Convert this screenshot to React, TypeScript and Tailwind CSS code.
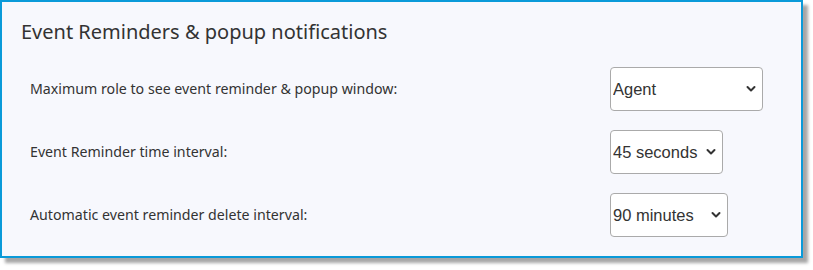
const settings = [
  {
    label: "Maximum role to see event reminder & popup window:",
    value: "Agent",
    options: ["Agent", "Supervisor", "Administrator"],
    width: "w-[153px]",
  },
  {
    label: "Event Reminder time interval:",
    value: "45 seconds",
    options: ["15 seconds", "30 seconds", "45 seconds", "60 seconds"],
    width: "w-[113px]",
  },
  {
    label: "Automatic event reminder delete interval:",
    value: "90 minutes",
    options: ["30 minutes", "60 minutes", "90 minutes"],
    width: "w-[118px]",
  },
];

const Chevron = () => (
  <svg
    className="pointer-events-none absolute right-[7px] top-1/2 -translate-y-1/2"
    width="10"
    height="7"
    viewBox="0 0 10 7"
    fill="none"
  >
    <path
      d="M1.5 1.5L5 5L8.5 1.5"
      stroke="#333"
      strokeWidth="2"
      strokeLinecap="round"
      strokeLinejoin="round"
    />
  </svg>
);

export default function App() {
  return (
    <div className="min-h-[270px] w-[813px] bg-white">
      <div className="h-[258px] w-[803px] border-2 border-[#0a9ad9] bg-[#f7f8fd] shadow-[5px_5px_3px_rgba(0,0,0,0.35)]">
        <h2
          className="pl-[19px] pt-[16px] text-[20px] leading-[28px] text-[#333]"
          style={{ fontFamily: '"Noto Sans", "Open Sans", sans-serif' }}
        >
          Event Reminders &amp; popup notifications
        </h2>
        <div className="mt-[21px] flex flex-col gap-[19px]">
          {settings.map((s) => (
            <div key={s.label} className="flex h-[44px] items-center">
              <label
                className="w-[608px] pl-[28px] text-[14.2px] text-[#333]"
                style={{ fontFamily: '"Noto Sans", "Open Sans", sans-serif' }}
              >
                {s.label}
              </label>
              <div className={`relative h-[44px] ${s.width}`}>
                <select
                  defaultValue={s.value}
                  className="h-full w-full appearance-none rounded-[4px] border border-[#aaa] bg-white pl-[2px] text-[16.5px] text-[#333] outline-none"
                  style={{ fontFamily: '"Liberation Sans", Arial, sans-serif' }}
                >
                  {s.options.map((o) => (
                    <option key={o}>{o}</option>
                  ))}
                </select>
                <Chevron />
              </div>
            </div>
          ))}
        </div>
      </div>
    </div>
  );
}
